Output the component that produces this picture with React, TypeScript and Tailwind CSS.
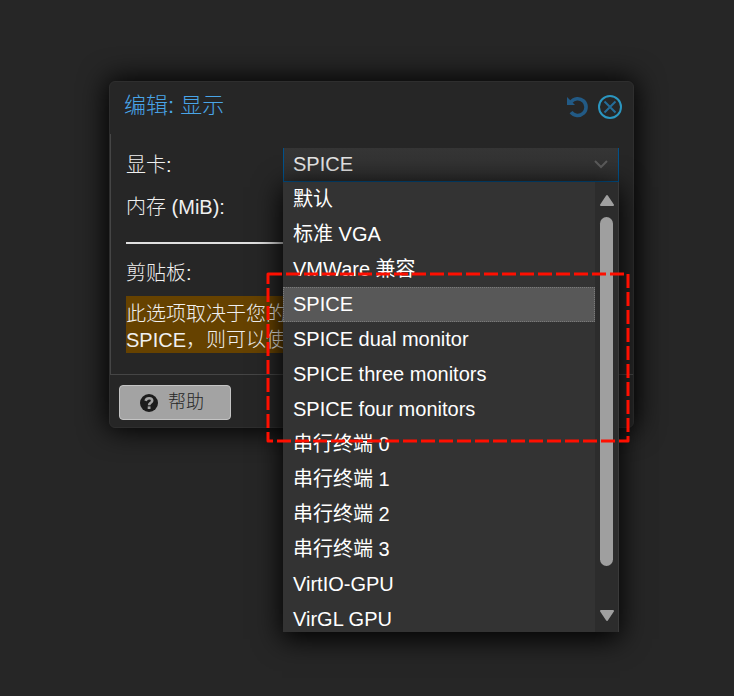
import { useState } from "react";

const OPTIONS = [
    "默认",
    "标准 VGA",
    "VMWare 兼容",
    "SPICE",
    "SPICE dual monitor",
    "SPICE three monitors",
    "SPICE four monitors",
    "串行终端 0",
    "串行终端 1",
    "串行终端 2",
    "串行终端 3",
    "VirtIO-GPU",
    "VirGL GPU",
];

function ResetIcon() {
    return (
        <svg width="22" height="22" viewBox="0 0 22 22" fill="none">
            <path d="M4 6 A8.400 8.400 0 1 1 4 16.200" stroke="currentColor" strokeWidth="3.600" />
            <path d="M0 1 V9 H8 Z" fill="currentColor" />
        </svg>
    );
}

function CloseIcon() {
    return (
        <svg width="26" height="26" viewBox="0 0 26 26" fill="none">
            <circle cx="13" cy="13" r="11" stroke="#2b96c0" strokeWidth="2" />
            <path d="M7.500 7.500 L18.500 18.500 M18.500 7.500 L7.500 18.500" stroke="#246c98" strokeWidth="2" />
        </svg>
    );
}

function HelpIcon() {
    return (
        <svg width="18" height="18" viewBox="0 0 18 18" fill="none">
            <circle cx="9" cy="9" r="9" fill="#1c1c1c" />
            <path d="M5.600 6.800 C6.500 3.400 12.200 3.600 12.200 6.800 C12.200 8.900 9.100 8.700 9.100 11.200" stroke="#a3a3a3" strokeWidth="2.600" />
            <path d="M7.700 12.400 H10.500 V15 H7.700 Z" fill="#a3a3a3" />
        </svg>
    );
}

function OptionList({ value, onSelect }: { value: string, onSelect: (value: string) => void }) {
    return (
        <div className="absolute top-[34px] -inset-x-px z-10 flex h-[450px] bg-[#333333] shadow-[0_6px_26px_1px_#000000]">
            <ul id="gpu-options" role="listbox" aria-label="显卡" className="flex-1 overflow-hidden text-white">
                {OPTIONS.map((option) => (
                    <li
                        key={option}
                        role="option"
                        aria-selected={option === value}
                        onClick={() => onSelect(option)}
                        className={`h-[35px] cursor-pointer border border-dotted px-[9px] leading-8 ${option === value ? "border-[#7a7a7a] bg-[#585858]" : "border-transparent"}`}
                    >
                        {option}
                    </li>
                ))}
            </ul>
            <div className="flex w-6 flex-col items-center border-r border-[#3a3a3a] bg-[#2c2c2c] pt-3 pb-2.5">
                <svg width="14" height="12" viewBox="0 0 14 12" fill="#a0a0a0" stroke="#a0a0a0" strokeWidth="2" strokeLinejoin="round">
                    <path d="M7 2 L13 11 H1 Z" />
                </svg>
                <div className="mt-[11px] mb-11 w-[13px] flex-1 rounded-full bg-[#9f9f9f]" />
                <svg width="14" height="12" viewBox="0 0 14 12" fill="#a0a0a0" stroke="#a0a0a0" strokeWidth="2" strokeLinejoin="round">
                    <path d="M7 10 L13 1 H1 Z" />
                </svg>
            </div>
            <svg className="pointer-events-none absolute top-[90px] -left-[17px]" width="364" height="172" fill="none">
                <rect x="2" y="2" width="360" height="167" stroke="#ff0f00" strokeWidth="3" strokeDasharray="14 4" strokeLinejoin="round" />
            </svg>
        </div>
    );
}

export default function App() {
    const [gpu, setGpu] = useState("SPICE");

    return (
        <main className="min-h-screen bg-[#262626] pt-[81px] pr-[100px] pl-[109px] font-['Liberation_Sans','Noto_Sans_CJK_SC',sans-serif] text-[20px] text-[#f0f0f0]">
            <section aria-labelledby="dialog-title" className="max-w-[525px] rounded-md border border-[#2e2e2e] bg-[#262626] shadow-[0_0_28px_2px_#000000]">
                <header className="flex h-[52px] items-center justify-between pr-2.5 pb-0.5 pl-3.5">
                    <h1 id="dialog-title" className="pb-1 text-[22px] font-light text-[#49a5e8]">编辑: 显示</h1>
                    <div className="flex items-center gap-2">
                        <button type="button" aria-label="重置" className="text-[#225a85]">
                            <ResetIcon />
                        </button>
                        <button type="button" aria-label="关闭">
                            <CloseIcon />
                        </button>
                    </div>
                </header>
                <form className="border-b border-l border-[#454545] pt-3.5 pr-3.5 pb-[21px] pl-[15px]">
                    <div className="flex items-center">
                        <label htmlFor="gpu" className="w-[157px] font-light">显卡:</label>
                        <div className="relative flex h-[34px] flex-1 items-center border-x border-b border-[#00528c] bg-linear-to-b from-[#363636] to-[#2e2e2e]">
                            <input
                                id="gpu"
                                role="combobox"
                                aria-expanded="true"
                                aria-controls="gpu-options"
                                readOnly
                                value={gpu}
                                className="w-full min-w-0 bg-transparent px-[9px] pb-0.5 text-[#e6e6e6] outline-none"
                            />
                            <svg className="mr-2.5 shrink-0" width="14" height="10" viewBox="0 0 14 10" fill="none" stroke="#5c5c5c" strokeWidth="2">
                                <path d="M1 1 L7 7 L13 1" />
                            </svg>
                            <OptionList value={gpu} onSelect={setGpu} />
                        </div>
                    </div>
                    <div className="mt-2 flex h-[34px] items-center">
                        <label htmlFor="memory" className="w-[157px] font-light">内存 (MiB):</label>
                        <input id="memory" className="min-w-0 flex-1 bg-[#333333] px-2" />
                    </div>
                    <hr className="mt-[18px] border-t-2 border-[#e0e0e0]" />
                    <div className="mt-3 flex h-[34px] items-center">
                        <label htmlFor="clipboard" className="w-[157px] font-light">剪贴板:</label>
                        <input id="clipboard" className="min-w-0 flex-1 bg-[#333333] px-2" />
                    </div>
                    <p className="mt-1.5 bg-[#664200] pt-[5px] leading-[26px] font-light">
                        此选项取决于您的
                        <br />
                        SPICE，则可以使
                    </p>
                </form>
                <footer className="px-[9px] pt-2.5 pb-[7px]">
                    <button type="button" className="flex h-[35px] w-28 items-center gap-2.5 rounded-[4px] border border-[#c4c4c4] bg-[#a3a3a3] pl-5 text-[18px] font-light text-[#262626]">
                        <HelpIcon />
                        帮助
                    </button>
                </footer>
            </section>
        </main>
    );
}
